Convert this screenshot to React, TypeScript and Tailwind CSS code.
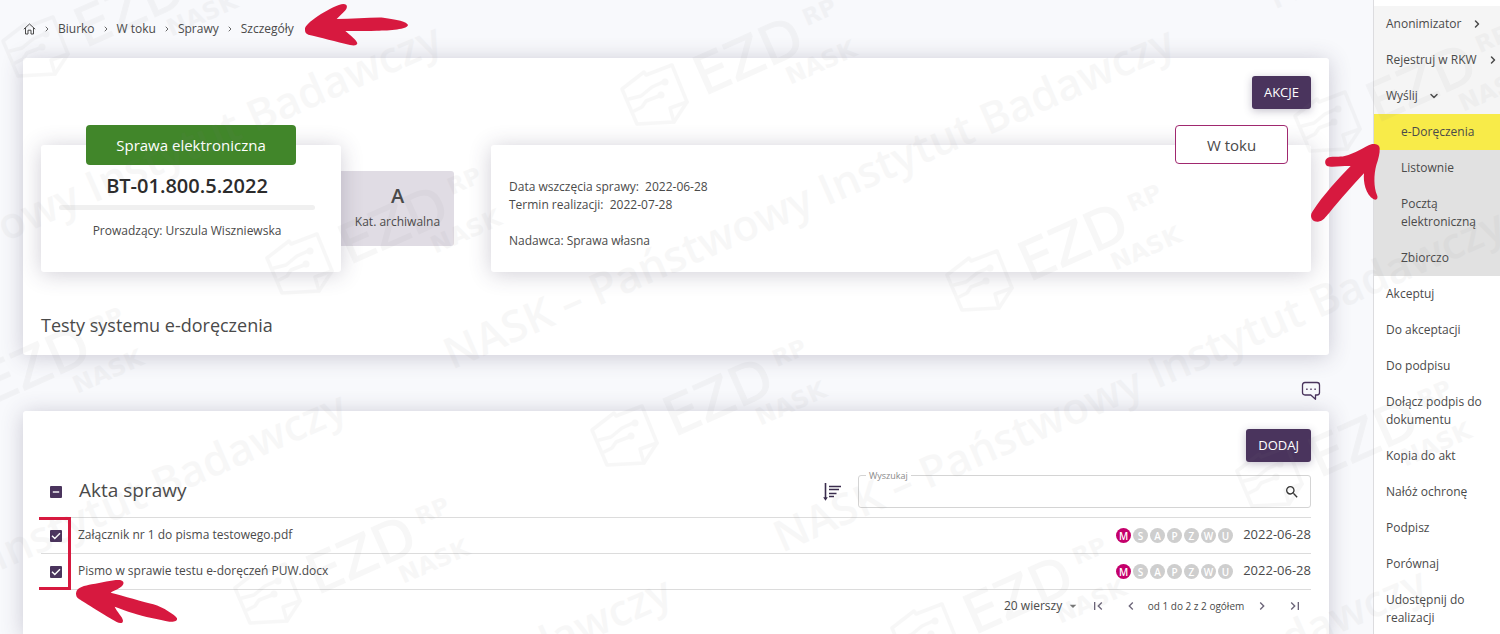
import React from 'react';
import { ChevronRight, ChevronDown } from 'lucide-react';
import { MdSearch, MdArrowDropDown, MdChevronLeft, MdChevronRight, MdFirstPage, MdLastPage } from 'react-icons/md';

const RED = '#d7193f';

const crumbs = ['Biurko', 'W toku', 'Sprawy', 'Szczegóły'];

const menuBottom = [
  'Akceptuj',
  'Do akceptacji',
  'Do podpisu',
  'Dołącz podpis do dokumentu',
  'Kopia do akt',
  'Nałóż ochronę',
  'Podpisz',
  'Porównaj',
  'Udostępnij do realizacji',
];

const files = [
  { name: 'Załącznik nr 1 do pisma testowego.pdf', date: '2022-06-28' },
  { name: 'Pismo w sprawie testu e-doręczeń PUW.docx', date: '2022-06-28' },
];

const statuses = ['M', 'S', 'A', 'P', 'Z', 'W', 'U'];

const slogans = [
  [452, 370],
  [782, 553],
  [-281, 367],
  [-376, 735],
  [-51, 920],
  [704, 911],
  [1274, 10],
];

const logos = [
  [692, 61],
  [662, 402],
  [1017, 247],
  [337, 230],
  [305, 560],
  [73, 13],
  [-21, 370],
  [1365, 88],
  [1307, 443],
  [962, 600],
];

function Watermark() {
  return (
    <svg
      aria-hidden="true"
      className="pointer-events-none absolute top-0 left-0 z-10"
      width="1500"
      height="634"
      viewBox="0 0 1500 634"
      fill="#808080"
      opacity="0.055"
    >
      {slogans.map(([x, y]) => (
        <text
          key={`${x}-${y}`}
          transform={`translate(${x} ${y}) rotate(-23.6)`}
          fontFamily="Open Sans"
          fontWeight="600"
          fontSize="43.5"
        >
          NASK – Państwowy Instytut Badawczy
        </text>
      ))}
      {logos.map(([x, y]) => (
        <g key={`${x}-${y}`} transform={`translate(${x} ${y})`}>
          <g fill="none" stroke="#808080" strokeWidth="3.5" strokeLinejoin="round" strokeLinecap="round">
            <path d="M-70 28 L-48 11 L-46 14 L-20 4 L-5 41 L-18 61 L-55 63 Z" />
            <path d="M-5 41 L-22 47 L-18 61" />
            <path d="M-63 38 L-51 35 L-40 26 L-29 21 M-58 50 L-50 46 L-46 40 L-33 35" />
          </g>
          <circle cx="-27" cy="21" r="3.5" />
          <circle cx="-31" cy="34" r="3.5" />
          <g transform="rotate(-24)" fontFamily="DejaVu Sans">
            <text x="-3" y="37" fontSize="54" stroke="#808080" strokeWidth="1">EZD</text>
            <text x="119" y="15" fontSize="23" fontWeight="700">RP</text>
            <text x="80" y="62" fontSize="24" fontWeight="700">NASK</text>
          </g>
        </g>
      ))}
    </svg>
  );
}

function HomeIcon() {
  return (
    <svg width="13" height="12" viewBox="0 0 13 12" fill="none" stroke="#4a4a4a" strokeWidth="1" strokeLinejoin="round" aria-hidden="true">
      <path d="M0.8 6.2 L6.5 1 L12.2 6.2 M2.5 5 V11 H5 V7.2 H8 V11 H10.5 V5" />
    </svg>
  );
}

function SortIcon() {
  return (
    <svg width="20" height="20" viewBox="0 0 20 20" fill="none" stroke="#3a2c4d" aria-hidden="true">
      <path d="M3.5 1 V17" strokeWidth="1.6" />
      <path d="M1.2 15.2 H5.8 L3.5 18.8 Z" fill="#3a2c4d" stroke="none" />
      <path d="M7 4.5 H19 M7 7.5 H17 M7 11.5 H14.5 M7 14.5 H12" strokeWidth="1.3" />
    </svg>
  );
}

function CommentIcon() {
  return (
    <svg width="20" height="20" viewBox="0 0 20 20" fill="none" stroke="#4a345d" strokeWidth="1.3" strokeLinejoin="round" aria-hidden="true">
      <path d="M4 1.5 H16 Q18.5 1.5 18.5 4 V11.5 Q18.5 14 16 14 H14.5 V18.3 L9.8 14 H4 Q1.5 14 1.5 11.5 V4 Q1.5 1.5 4 1.5 Z" />
      <path d="M5.2 8.2 H6.6 M9.3 8.2 H10.7 M13.4 8.2 H14.8" strokeWidth="1.5" />
    </svg>
  );
}

function CheckBox({ label, mixed }: { label: string; mixed?: boolean }) {
  return (
    <label className="relative block size-3">
      <input
        type="checkbox"
        defaultChecked
        aria-label={label}
        className="block size-3 appearance-none rounded-[1px] bg-[#4a345d]"
      />
      <svg className="pointer-events-none absolute inset-0" width="12" height="12" viewBox="0 0 12 12" fill="none" stroke="#fff" strokeWidth="1.4" aria-hidden="true">
        <path d={mixed ? 'M2.8 6 H9.2' : 'M2 5.8 L4.8 8.6 L10 3.2'} />
      </svg>
    </label>
  );
}

const item = 'block w-full py-[9px] pr-2 pl-3 text-left text-xs leading-[18px]';
const groupItem = 'flex w-full items-center gap-2.5 py-[9px] pl-3 text-left text-xs leading-[18px] whitespace-nowrap';

function Sidebar() {
  return (
    <aside className="w-[127px] shrink-0 border-l border-[#dcdcdf] bg-white">
      <nav className="pt-1.5">
        <div className="bg-[#f5f5f5]">
          <button type="button" className={groupItem}>
            Anonimizator
            <ChevronRight className="size-3 shrink-0" strokeWidth={3} />
          </button>
          <button type="button" className={groupItem}>
            Rejestruj w RKW
            <ChevronRight className="size-3 shrink-0" strokeWidth={3} />
          </button>
          <button type="button" className={groupItem}>
            Wyślij
            <ChevronDown className="size-3 shrink-0" strokeWidth={3} />
          </button>
        </div>
        <div className="bg-[#e1e1e1]">
          <div className="relative bg-[#f8eb49]">
            <a href="#e-doreczenia" className="block py-[9px] pl-[27px] text-xs leading-[18px]">
              e-Doręczenia
            </a>
            <svg className="pointer-events-none absolute top-[27px] -left-[67px] z-20" width="74" height="83" viewBox="52 123 222 249" aria-hidden="true">
              <path
                fill={RED}
                d="M270 145 C270 133 255 131 245 133 C225 140 195 162 165 168 C150 172 130 168 118 172 C104 176 104 192 112 198 C125 203 160 197 183 198 C150 232 100 285 68 335 C58 350 68 366 85 365 C100 365 108 350 118 340 C150 300 195 250 223 220 C220 245 228 285 252 298 C262 302 266 295 262 285 C252 262 252 225 260 195 C266 178 271 160 270 145Z"
              />
            </svg>
          </div>
          {['Listownie', 'Pocztą elektroniczną', 'Zbiorczo'].map((t) => (
            <a key={t} href="#wyslij" className="block py-[9px] pr-4 pl-[27px] text-xs leading-[18px]">
              {t}
            </a>
          ))}
        </div>
        {menuBottom.map((t) => (
          <button key={t} type="button" className={item}>
            {t}
          </button>
        ))}
      </nav>
    </aside>
  );
}

const card = 'bg-white shadow-[0_2px_22px_rgba(60,50,85,0.24)]';
const primary =
  'h-[33px] rounded-[3px] bg-[#4a345d] px-3 text-[13px] font-medium text-white shadow-[0_2px_8px_rgba(60,50,85,0.3)]';

function CaseCard() {
  return (
    <section className={`${card} rounded-[3px] px-[18px] pt-[18px] pb-[17px]`}>
      <div className="flex justify-end">
        <button type="button" className={primary}>AKCJE</button>
      </div>
      <div className="mt-9 flex items-start">
        <div className={`${card} relative z-[1] h-[127px] w-[300px] rounded-[3px] pt-7 pr-[26px] pl-[18px] text-center`}>
          <div className="absolute -top-5 left-[45px] flex h-10 w-[210px] items-center justify-center rounded bg-[#41862a] text-[15px] text-white">
            Sprawa elektroniczna
          </div>
          <p className="text-xl leading-[26px] font-semibold text-[#2c2c2c]">BT-01.800.5.2022</p>
          <div className="mt-1.5 h-[5px] rounded-full bg-[#f0f0f0]" />
          <p className="mt-3 text-xs leading-[18px]">Prowadzący: Urszula Wiszniewska</p>
        </div>
        <div className="mt-[26px] mr-[37px] flex h-[75px] w-[113px] shrink-0 flex-col items-center rounded-r-[3px] bg-[#e0dce4] pt-3">
          <p className="text-xl leading-[26px] font-semibold">A</p>
          <p className="mt-1 text-xs leading-[18px]">Kat. archiwalna</p>
        </div>
        <div className={`${card} relative h-[127px] flex-1 rounded-[3px] px-[18px] pt-[33px] text-xs leading-[18px]`}>
          <div className="absolute -top-5 right-[23px] flex h-[39px] w-[113px] items-center justify-center rounded border border-[#a0286f] bg-white text-[15px]">
            W toku
          </div>
          <p>Data wszczęcia sprawy:&nbsp; 2022-06-28</p>
          <p>Termin realizacji:&nbsp; 2022-07-28</p>
          <p className="mt-[18px]">Nadawca: Sprawa własna</p>
        </div>
      </div>
      <h1 className="mt-10 text-lg leading-[26px]">Testy systemu e-doręczenia</h1>
    </section>
  );
}

function FilesCard() {
  const page = 'flex h-8 w-[33px] items-center justify-center text-[#6b6478]';
  return (
    <section className={`${card} flex-1 rounded-t-[3px] px-[18px] pt-[18px]`}>
      <div className="flex justify-end">
        <button type="button" className={primary}>DODAJ</button>
      </div>
      <div className="mt-[13px] flex h-[33px] items-center pl-[9px]">
        <CheckBox label="Zaznacz wszystkie" mixed />
        <h2 className="ml-[17px] flex-1 pb-1 text-[19px] leading-6">Akta sprawy</h2>
        <button type="button" aria-label="Sortuj" className="mr-4">
          <SortIcon />
        </button>
        <div className="relative flex h-[33px] w-[453px] items-center rounded-[3px] border border-[#d4d4d4] pr-2.5">
          <label htmlFor="search" className="absolute -top-2 left-[7px] bg-white px-[3px] text-[9px] leading-4 text-[#8a8a8a]">
            Wyszukaj
          </label>
          <input id="search" type="text" className="h-full min-w-0 flex-1 bg-transparent px-3 text-xs outline-none" />
          <MdSearch className="size-4 text-[#333]" />
        </div>
      </div>
      <div className="relative mt-[9px]">
        <table className="w-full border-collapse text-xs">
          <tbody>
            {files.map((f) => (
              <tr key={f.name} className="h-9 border-y border-[#dcdcdc]">
                <td className="w-[37px] pl-[9px]">
                  <CheckBox label={f.name} />
                </td>
                <td className="pb-0.5">{f.name}</td>
                <td className="w-[126px]">
                  <div className="flex gap-0.5">
                    {statuses.map((s) => (
                      <span
                        key={s}
                        className={`flex size-[15px] items-center justify-center rounded-full text-[10px] leading-none font-semibold text-white ${s === 'M' ? 'bg-[#c4006b]' : 'bg-[#cecece]'}`}
                      >
                        {s}
                      </span>
                    ))}
                  </div>
                </td>
                <td className="w-[69px] pb-0.5 text-right text-[13px] whitespace-nowrap">{f.date}</td>
              </tr>
            ))}
          </tbody>
        </table>
        <div className="pointer-events-none absolute inset-y-0 -left-0.5 z-20 w-8 border-y-3 border-r-3 border-[#d7193f]" />
        <svg className="pointer-events-none absolute top-[61px] left-[33px] z-20" width="105" height="48" viewBox="192 324 315 144" aria-hidden="true">
          <path
            fill={RED}
            d="M198 370 C200 350 225 348 245 343 C275 338 305 330 325 330 C340 330 344 338 338 346 C330 356 312 362 302 368 C340 378 400 395 430 403 C460 412 495 435 501 445 C503 455 490 456 478 455 C450 450 400 440 370 430 C350 424 330 416 314 410 C320 425 338 440 339 452 C338 462 328 460 320 456 C290 440 220 395 208 388 C200 383 198 378 198 370Z"
          />
        </svg>
      </div>
      <div className="flex h-8 items-center justify-end">
        <div className="relative flex items-center">
          <select aria-label="Liczba wierszy" className="appearance-none bg-transparent pr-[18px] text-xs outline-none">
            <option>20 wierszy</option>
          </select>
          <MdArrowDropDown className="pointer-events-none absolute right-0 size-4 text-[#777]" />
        </div>
        <button type="button" aria-label="Pierwsza strona" className={page}>
          <MdFirstPage className="size-4" />
        </button>
        <button type="button" aria-label="Poprzednia strona" className={page}>
          <MdChevronLeft className="size-4" />
        </button>
        <span className="w-[98px] text-center text-[10px] whitespace-nowrap">od 1 do 2 z 2 ogółem</span>
        <button type="button" aria-label="Następna strona" className={page}>
          <MdChevronRight className="size-4" />
        </button>
        <button type="button" aria-label="Ostatnia strona" className={page}>
          <MdLastPage className="size-4" />
        </button>
      </div>
    </section>
  );
}

export default function App() {
  return (
    <div className="relative flex min-h-screen overflow-hidden bg-[#f8f9fc] font-['Open_Sans',sans-serif] text-[#4a4a4a]">
      <main className="flex min-w-0 flex-1 flex-col pr-11 pl-[23px]">
        <nav aria-label="Ścieżka" className="relative flex h-[58px] items-center text-xs">
          <a href="#start" aria-label="Start">
            <HomeIcon />
          </a>
          {crumbs.map((c) => (
            <React.Fragment key={c}>
              <ChevronRight className="mx-[7px] size-2" strokeWidth={2.5} />
              <a href="#sciezka">{c}</a>
            </React.Fragment>
          ))}
          <svg className="pointer-events-none relative z-20 ml-2.5 self-start" width="105" height="48" viewBox="912 0 315 144" aria-hidden="true">
            <path
              fill={RED}
              d="M915 85 C920 65 1000 15 1030 12 C1045 12 1042 25 1035 32 L1010 57 C1060 57 1110 52 1150 53 C1190 58 1222 65 1224 75 C1222 88 1170 92 1130 92 C1100 94 1065 92 1036 93 C1050 105 1070 120 1072 130 C1070 138 1060 137 1050 135 C1010 125 960 112 925 104 C915 100 915 95 915 85Z"
            />
          </svg>
        </nav>
        <CaseCard />
        <div className="flex h-14 items-center justify-end pt-4 pr-2">
          <button type="button" aria-label="Komentarze">
            <CommentIcon />
          </button>
        </div>
        <FilesCard />
      </main>
      <Sidebar />
      <Watermark />
    </div>
  );
}
